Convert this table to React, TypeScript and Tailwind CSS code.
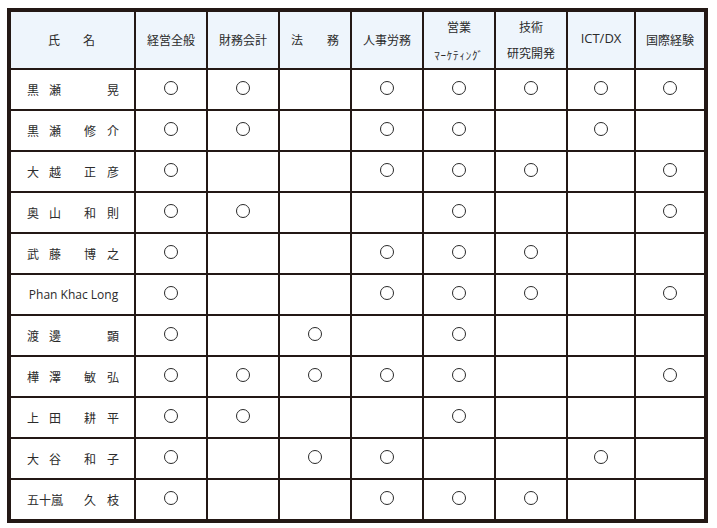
const cols = ["経営全般", "財務会計", "法務", "人事労務", "営業", "技術", "ICT/DX", "国際経験"];

type Person = { sei: string[]; mei: string[]; latin?: string; marks: number[] };

const people: Person[] = [
    { sei: ["黒", "瀬"], mei: ["晃"], marks: [1, 1, 0, 1, 1, 1, 1, 1] },
    { sei: ["黒", "瀬"], mei: ["修", "介"], marks: [1, 1, 0, 1, 1, 0, 1, 0] },
    { sei: ["大", "越"], mei: ["正", "彦"], marks: [1, 0, 0, 1, 1, 1, 0, 1] },
    { sei: ["奥", "山"], mei: ["和", "則"], marks: [1, 1, 0, 0, 1, 0, 0, 1] },
    { sei: ["武", "藤"], mei: ["博", "之"], marks: [1, 0, 0, 1, 1, 1, 0, 0] },
    { sei: [], mei: [], latin: "Phan Khac Long", marks: [1, 0, 0, 1, 1, 1, 0, 1] },
    { sei: ["渡", "邊"], mei: ["顕"], marks: [1, 0, 1, 0, 1, 0, 0, 0] },
    { sei: ["樺", "澤"], mei: ["敏", "弘"], marks: [1, 1, 1, 1, 1, 0, 0, 1] },
    { sei: ["上", "田"], mei: ["耕", "平"], marks: [1, 1, 0, 0, 1, 0, 0, 0] },
    { sei: ["大", "谷"], mei: ["和", "子"], marks: [1, 0, 1, 1, 0, 0, 1, 0] },
    { sei: ["五十嵐"], mei: ["久", "枝"], marks: [1, 0, 0, 1, 1, 1, 0, 0] },
];

const font = { fontFamily: '"Noto Sans CJK JP", "Open Sans", sans-serif' };

const HeaderCell = ({ label }: { label: string }) => {
    if (label === "営業") {
        return (
            <div className="bg-[#eef5fc] flex flex-col items-center pt-[7px]">
                <span className="text-[12px] leading-[16px]">営業</span>
                <span className="text-[11px] leading-[12px] mt-[14px] tracking-[0.8px]">ﾏｰｹﾃｨﾝｸﾞ</span>
            </div>
        );
    }
    if (label === "技術") {
        return (
            <div className="bg-[#eef5fc] flex flex-col items-center pt-[7px]">
                <span className="text-[12px] leading-[16px]">技術</span>
                <span className="text-[12px] leading-[16px] mt-[10px]">研究開発</span>
            </div>
        );
    }
    if (label === "法務") {
        return (
            <div className="bg-[#eef5fc] flex items-center justify-center gap-[24px] text-[12px]">
                <span>法</span>
                <span>務</span>
            </div>
        );
    }
    if (label === "ICT/DX") {
        return (
            <div className="bg-[#eef5fc] flex items-center justify-center pb-[3px] text-[13px] font-['Open_Sans']">
                {label}
            </div>
        );
    }
    return <div className="bg-[#eef5fc] flex items-center justify-center text-[12px]">{label}</div>;
};

const Mark = () => <span className="block w-[14px] h-[14px] rounded-full border-[1.3px] border-[#2a2a2a]" />;

const NameCell = ({ p }: { p: Person }) => {
    if (p.latin) {
        return (
            <div className="bg-white flex items-center justify-center text-[12px] font-['Open_Sans'] pl-[2px]">
                {p.latin}
            </div>
        );
    }
    return (
        <div className="bg-white flex items-center justify-between pl-[16px] pr-[15px] text-[12px]">
            <div className="flex gap-[10px]">
                {p.sei.map((c, i) => (
                    <span key={i}>{c}</span>
                ))}
            </div>
            <div className="flex gap-[11px]">
                {p.mei.map((c, i) => (
                    <span key={i}>{c}</span>
                ))}
            </div>
        </div>
    );
};

export default function App() {
    return (
        <div className="w-[717px] h-[528px] bg-white pt-[8px] pl-[7px]" style={font}>
            <div className="w-[701px] border-4 border-[#231815] text-[#2b2b2b]">
                <div className="grid grid-cols-[123px_70px_70px_70px_70px_70px_70px_66px_68px] grid-rows-[56px_repeat(11,39px)] gap-[2px] bg-[#231815]">
                    <div className="bg-[#eef5fc] flex items-center justify-center gap-[23px] text-[12px] pr-[2px]">
                        <span>氏</span>
                        <span>名</span>
                    </div>
                    {cols.map((c) => (
                        <HeaderCell key={c} label={c} />
                    ))}
                    {people.map((p, r) => (
                        <div key={r} className="contents">
                            <NameCell p={p} />
                            {p.marks.map((m, i) => (
                                <div key={i} className="bg-white flex items-center justify-center pb-[3px]">
                                    {m ? <Mark /> : null}
                                </div>
                            ))}
                        </div>
                    ))}
                </div>
            </div>
        </div>
    );
}
